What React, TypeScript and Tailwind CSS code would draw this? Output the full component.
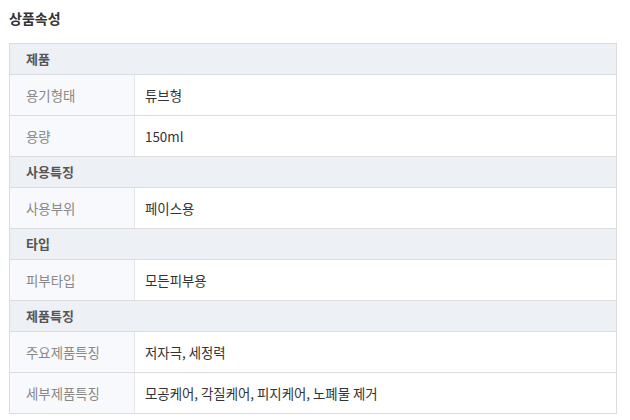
import React from "react";

type Row = { type: "h"; label: string } | { type: "d"; label: string; value: string };

const rows: Row[] = [
  { type: "h", label: "제품" },
  { type: "d", label: "용기형태", value: "튜브형" },
  { type: "d", label: "용량", value: "150ml" },
  { type: "h", label: "사용특징" },
  { type: "d", label: "사용부위", value: "페이스용" },
  { type: "h", label: "타입" },
  { type: "d", label: "피부타입", value: "모든피부용" },
  { type: "h", label: "제품특징" },
  { type: "d", label: "주요제품특징", value: "저자극, 세정력" },
  { type: "d", label: "세부제품특징", value: "모공케어, 각질케어, 피지케어, 노폐물 제거" },
];

export default function App() {
  return (
    <div
      className="w-[630px] h-[420px] bg-white overflow-hidden"
      style={{ fontFamily: '"Noto Sans CJK KR", "Noto Sans", sans-serif' }}
    >
      <div className="pl-[9px] pt-[8px] h-[43px] text-[14px] font-bold text-[#333] leading-[20px]">상품속성</div>
      <div className="ml-[9px] w-[608px] border border-[#dcdcdc] border-b-0">
        {rows.map((r, i) =>
          r.type === "h" ? (
            <div
              key={i}
              className="h-[31px] bg-[#edf0f5] border-b border-[#d9dce0] flex items-center pl-[16px] text-[13px] font-bold text-[#555]"
            >
              {r.label}
            </div>
          ) : (
            <div key={i} className="h-[41px] flex border-b border-[#dcdcdc] text-[13.4px]">
              <div className="w-[125px] shrink-0 bg-[#f8f9fc] border-r border-[#e4e6ea] flex items-center pl-[16px] text-[#888]">
                {r.label}
              </div>
              <div className="flex-1 flex items-center pl-[10px] text-[#333]">{r.value}</div>
            </div>
          )
        )}
      </div>
    </div>
  );
}
